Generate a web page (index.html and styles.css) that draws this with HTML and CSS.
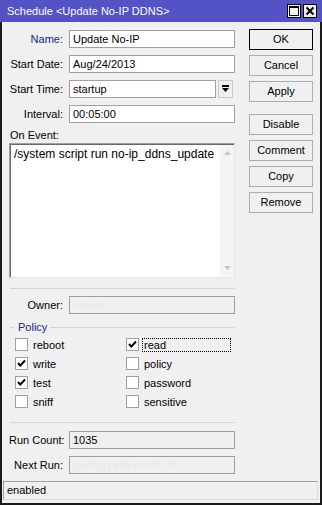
FILE: index.html
```html
<!DOCTYPE html>
<html lang="en">

<head>
    <meta charset="UTF-8">
    <title>Schedule</title>
    <link rel="stylesheet" href="styles.css">
</head>

<body>
    <div class="window">
        <div class="titlebar">
            <span class="title">Schedule &lt;Update No-IP DDNS&gt;</span>
            <span class="tb-btn">
                <svg width="10" height="10" viewBox="0 0 10 10"><rect x="0.5" y="0.5" width="9" height="9" fill="none" stroke="#000"/><line x1="0" y1="1.5" x2="10" y2="1.5" stroke="#000"/></svg>
            </span>
            <span class="tb-btn">
                <svg width="10" height="10" viewBox="0 0 10 10"><path d="M1.5 1.5 L8.5 8.5 M8.5 1.5 L1.5 8.5" stroke="#000" stroke-width="2"/></svg>
            </span>
        </div>

        <div class="frame">
            <div class="body">
                <div class="form">
                    <div class="rows">
                        <div class="row">
                            <span class="label name">Name:</span>
                            <span class="field">Update No-IP</span>
                        </div>
                        <div class="row">
                            <span class="label">Start Date:</span>
                            <span class="field">Aug/24/2013</span>
                        </div>
                        <div class="row">
                            <span class="label">Start Time:</span>
                            <span class="field">startup</span>
                            <span class="dd">
                                <svg width="7" height="8" viewBox="0 0 7 8"><rect x="0" y="0" width="7" height="2" fill="#000"/><path d="M0 3 L7 3 L3.5 7 Z" fill="#000"/></svg>
                            </span>
                        </div>
                        <div class="row">
                            <span class="label">Interval:</span>
                            <span class="field">00:05:00</span>
                        </div>
                    </div>

                    <div class="caption">On Event:</div>
                    <div class="script">
                        <div class="script-text">/system script run no-ip_ddns_update</div>
                        <div class="scrollbar">
                            <svg width="7" height="4" viewBox="0 0 7 4"><path d="M0 4 L7 4 L3.5 0 Z" fill="#c4c4c4"/></svg>
                            <svg width="7" height="4" viewBox="0 0 7 4"><path d="M0 0 L7 0 L3.5 4 Z" fill="#c4c4c4"/></svg>
                        </div>
                    </div>

                    <div class="sep"></div>

                    <div class="row owner">
                        <span class="label">Owner:</span>
                        <span class="field disabled"><span class="ghost">admin</span></span>
                    </div>

                    <div class="group-title">Policy</div>
                    <div class="checks">
                        <div class="check"><span class="box"></span>reboot</div>
                        <div class="check"><span class="box"><svg width="11" height="11" viewBox="0 0 11 11"><path d="M2 5 L4.3 7.6 L9 2.5" fill="none" stroke="#000" stroke-width="2"/></svg></span><span class="focus">read</span></div>
                        <div class="check"><span class="box"><svg width="11" height="11" viewBox="0 0 11 11"><path d="M2 5 L4.3 7.6 L9 2.5" fill="none" stroke="#000" stroke-width="2"/></svg></span>write</div>
                        <div class="check"><span class="box"></span>policy</div>
                        <div class="check"><span class="box"><svg width="11" height="11" viewBox="0 0 11 11"><path d="M2 5 L4.3 7.6 L9 2.5" fill="none" stroke="#000" stroke-width="2"/></svg></span>test</div>
                        <div class="check"><span class="box"></span>password</div>
                        <div class="check"><span class="box"></span>sniff</div>
                        <div class="check"><span class="box"></span>sensitive</div>
                    </div>

                    <div class="sep sep-low"></div>

                    <div class="rows run">
                        <div class="row">
                            <span class="label">Run Count:</span>
                            <span class="field disabled">1035</span>
                        </div>
                        <div class="row">
                            <span class="label">Next Run:</span>
                            <span class="field disabled"><span class="ghost">jan/01/1970 00:00:00</span></span>
                        </div>
                    </div>
                </div>

                <div class="actions">
                    <span class="btn default">OK</span>
                    <span class="btn">Cancel</span>
                    <span class="btn">Apply</span>
                    <span class="btn spaced">Disable</span>
                    <span class="btn">Comment</span>
                    <span class="btn">Copy</span>
                    <span class="btn">Remove</span>
                </div>
            </div>

            <div class="status">enabled</div>
        </div>
    </div>
</body>

</html>
```

FILE: styles.css
```css
body {
    margin: 0;
    font-family: "Liberation Sans", Arial, sans-serif;
    font-size: 11px;
    color: #000;
    background: #f0f0f0;
}

.window {
    width: 322px;
    height: 505px;
    display: flex;
    flex-direction: column;
}

/* title bar */
.titlebar {
    height: 22px;
    flex-shrink: 0;
    display: flex;
    align-items: center;
    padding: 0 5px 0 7px;
    background: #5353c5;
    color: #fff;
}

.title {
    flex: 1;
}

.tb-btn {
    width: 14px;
    height: 14px;
    box-sizing: border-box;
    margin-left: 2px;
    border: 1px solid #000;
    background: #f0f0f0;
    display: flex;
    align-items: center;
    justify-content: center;
}

.frame {
    flex: 1;
    display: flex;
    flex-direction: column;
    border: 2px solid #1b1b1b;
    border-top: none;
}

.body {
    display: flex;
    padding: 8px 0 0 7px;
}

.form {
    width: 226px;
}

/* label + field rows */
.rows {
    display: flex;
    flex-direction: column;
    gap: 7px;
}

.row {
    display: flex;
    align-items: center;
    height: 18px;
}

.label {
    width: 60px;
    box-sizing: border-box;
    padding-right: 6px;
    text-align: right;
    white-space: nowrap;
}

.label.name {
    color: #202090;
}

.field {
    flex: 1;
    height: 18px;
    box-sizing: border-box;
    padding: 0 3px;
    border: 1px solid #a0a0a0;
    background: #fff;
    line-height: 16px;
    white-space: nowrap;
    overflow: hidden;
}

.field.disabled {
    background: #f0f0f0;
}

.ghost {
    color: #e9e9e9;
}

.dd {
    width: 15px;
    height: 18px;
    box-sizing: border-box;
    margin: 0 2px 0 2px;
    border: 1px solid #c8c8c8;
    background: #f0f0f0;
    display: flex;
    align-items: center;
    justify-content: center;
}

/* script box */
.caption {
    height: 14px;
    line-height: 14px;
    margin-top: 5px;
    padding-left: 1px;
}

.script {
    height: 135px;
    margin-top: 1px;
    box-sizing: border-box;
    display: flex;
    border: 1px solid;
    border-color: #a0a0a0 #e3e3e3 #e3e3e3 #a0a0a0;
    box-shadow: inset 1px 1px #696969;
    background: #fff;
}

.script-text {
    flex: 1;
    padding: 3px 4px;
    font-size: 12px;
    white-space: nowrap;
}

.scrollbar {
    width: 14px;
    margin: 1px 0;
    background: #f4f4f4;
    display: flex;
    flex-direction: column;
    justify-content: space-between;
    align-items: center;
    padding: 6px 0;
    box-sizing: border-box;
}

.sep {
    margin: 10px 0 0 1px;
    border-top: 1px solid #d6d6d6;
}

.sep-low {
    margin-top: 11px;
}

.owner {
    margin-top: 7px;
}

/* policy group */
.group-title {
    height: 14px;
    margin-top: 6px;
    display: flex;
    align-items: center;
    color: #202090;
}

.group-title::before,
.group-title::after {
    content: "";
    border-top: 1px solid #d6d6d6;
}

.group-title::before {
    width: 5px;
    margin: 0 3px 0 1px;
}

.group-title::after {
    flex: 1;
    margin-left: 3px;
}

.checks {
    display: grid;
    grid-template-columns: 111px 1fr;
    margin-top: 1px;
    padding-left: 6px;
}

.check {
    height: 19px;
    display: flex;
    align-items: center;
}

.box {
    width: 13px;
    height: 13px;
    box-sizing: border-box;
    margin-right: 5px;
    border: 1px solid #a0a0a0;
    background: #fff;
    display: flex;
    align-items: center;
    justify-content: center;
}

.focus {
    width: 89px;
    height: 14px;
    box-sizing: border-box;
    margin-left: -2px;
    padding-left: 1px;
    border: 1px dotted #000;
    line-height: 12px;
}

.run {
    margin-top: 8px;
}

/* buttons */
.actions {
    width: 64px;
    margin: -1px 0 0 14px;
    display: flex;
    flex-direction: column;
    gap: 5px;
}

.btn {
    height: 21px;
    box-sizing: border-box;
    border: 1px solid #adadad;
    background: #f0f0f0;
    text-align: center;
    line-height: 19px;
}

.btn.default {
    border-color: #000;
}

.btn.spaced {
    margin-top: 7px;
}

.status {
    height: 19px;
    margin: 7px 2px 0 1px;
    box-sizing: border-box;
    padding-left: 3px;
    border: 1px solid;
    border-color: #a0a0a0 #dcdcdc #dcdcdc #a0a0a0;
    line-height: 17px;
}
```
